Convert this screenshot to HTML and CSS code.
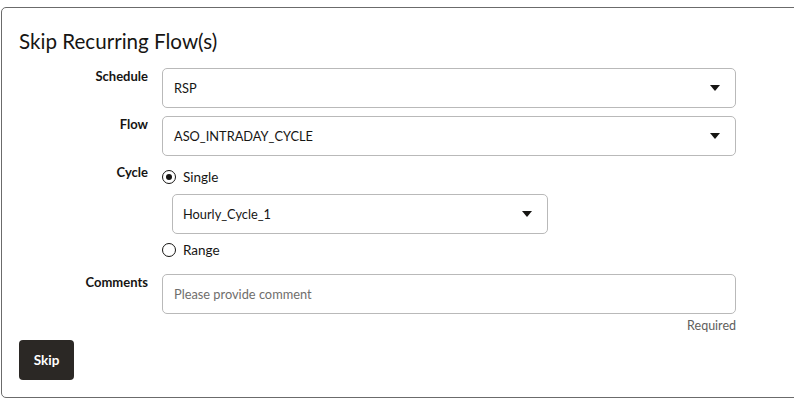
FILE: index.html
```html
<!DOCTYPE html>
<html>
<head>
<meta charset="utf-8">
<link rel="stylesheet" href="styles.css">
</head>
<body>
<div class="dialog">
  <h1 class="title">Skip Recurring Flow(s)</h1>
  <div class="form">
    <div class="label">Schedule</div>
    <div class="field">
      <div class="select"><span>RSP</span><span class="caret"></span></div>
    </div>
    <div class="label">Flow</div>
    <div class="field">
      <div class="select"><span>ASO_INTRADAY_CYCLE</span><span class="caret"></span></div>
    </div>
    <div class="label">Cycle</div>
    <div class="field">
      <div class="radio-row"><span class="radio checked"></span><span>Single</span></div>
      <div class="select sub"><span>Hourly_Cycle_1</span><span class="caret"></span></div>
      <div class="radio-row range"><span class="radio"></span><span>Range</span></div>
    </div>
    <div class="label comments-label">Comments</div>
    <div class="field comments-field">
      <div class="input"><span class="placeholder">Please provide comment</span></div>
      <div class="hint">Required</div>
    </div>
  </div>
  <button class="btn">Skip</button>
</div>
</body>
</html>
```
FILE: styles.css
```css
* { box-sizing: border-box; }
body {
  margin: 0;
  background: #fff;
  font-family: "Lato", "Noto Sans", sans-serif;
  color: #161513;
  width: 794px;
  height: 400px;
  overflow: hidden;
}
.dialog {
  margin: 7px 0 0 1px;
  width: 830px;
  height: 391px;
  border: 1px solid #6b6b6b;
  border-radius: 5px;
  padding: 0 0 0 17px;
}
.title {
  margin: 0;
  padding-top: 19px;
  font-size: 20.6px;
  line-height: 28px;
  font-weight: 400;
  height: 60px;
}
.form {
  display: grid;
  grid-template-columns: 129px 574px;
  column-gap: 14px;
  row-gap: 8px;
}
.label {
  text-align: right;
  font-size: 13px;
  font-weight: 700;
  line-height: 16px;
  padding-top: 0;
}
.select, .input {
  height: 40px;
  border: 1px solid #b9b9b9;
  border-radius: 5px;
  display: flex;
  align-items: center;
  justify-content: space-between;
  padding: 0 15px 0 11px;
  font-size: 12.8px;
}
.caret {
  width: 0;
  height: 0;
  border-left: 5px solid transparent;
  border-right: 5px solid transparent;
  border-top: 6px solid #161513;
}
.radio-row {
  display: flex;
  align-items: center;
  height: 26px;
  font-size: 13.5px;
  gap: 7px;
}
.radio {
  width: 14px;
  height: 14px;
  border: 1.5px solid #161513;
  border-radius: 50%;
  display: flex;
  align-items: center;
  justify-content: center;
}
.radio.checked::after {
  content: "";
  width: 6px;
  height: 6px;
  border-radius: 50%;
  background: #161513;
}
.select.sub {
  width: 376px;
  margin: 4px 0 0 10px;
  padding-left: 10px;
}
.range { margin-top: 3px; }
.comments-label { margin-top: 3px; }
.comments-field { margin-top: 3px; }
.placeholder { color: #6f6e6c; }
.hint {
  text-align: right;
  font-size: 12.5px;
  color: #605e5c;
  margin-top: 4px;
  line-height: 16px;
}
.btn {
  margin-top: 6px;
  width: 55px;
  height: 40px;
  border: none;
  border-radius: 4px;
  background: #2b2825;
  color: #fff;
  font-family: "Lato", "Noto Sans", sans-serif;
  font-weight: 700;
  font-size: 13.5px;
  padding: 0;
}
```
